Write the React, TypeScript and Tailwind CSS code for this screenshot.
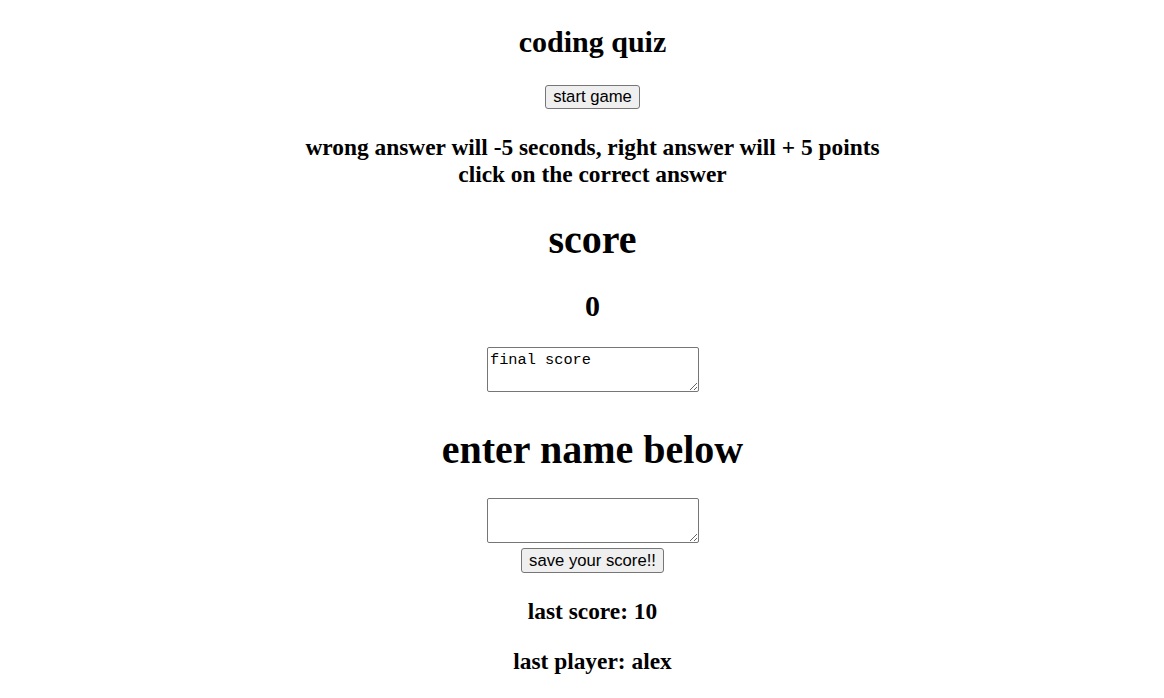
import { FC } from 'react';

const serif = "font-['Liberation_Serif','Times_New_Roman',serif]";
const btn =
  "px-[7.5px] border border-[#767676] rounded-[3px] bg-[#efefef] text-[16.67px] leading-[1.15] text-black font-['Liberation_Sans',Arial,sans-serif]";
const area =
  "block w-[212px] h-[45px] border border-[#767676] rounded-[2px] p-[2.5px] text-[15.3px] leading-[1.2] text-black font-['Liberation_Mono','Courier_New',monospace]";

const App: FC = () => {
  return (
    <div className={`min-h-screen bg-white text-black pl-[21px] ${serif}`}>
      <div className="flex flex-col items-center text-center">
        <h2 className="mt-[25px] text-[30px] font-bold leading-[1.15]">coding quiz</h2>

        <button className={`mt-[25.5px] h-[24px] ${btn}`}>start game</button>

        <h3 className="mt-[24.7px] text-[23.4px] font-bold leading-[1.15]">
          wrong answer will -5 seconds, right answer will + 5 points
          <br />
          click on the correct answer
        </h3>

        <h1 className="mt-[29.3px] text-[40px] font-bold leading-[1.15]">score</h1>

        <h2 className="mt-[25.8px] text-[30px] font-bold leading-[1.15]">0</h2>

        <textarea defaultValue="final score" className={`mt-[24px] ${area}`} />

        <h1 className="mt-[35px] text-[40px] font-bold leading-[1.15]">enter name below</h1>

        <textarea className={`mt-[25px] ${area}`} />
        <button className={`mt-[5px] h-[25px] ${btn}`}>save your score!!</button>

        <h3 className="mt-[25.4px] text-[23.4px] font-bold leading-[1.15]">last score: 10</h3>
        <h3 className="mt-[22.4px] text-[23.4px] font-bold leading-[1.15]">last player: alex</h3>
      </div>
    </div>
  );
};

export default App;
